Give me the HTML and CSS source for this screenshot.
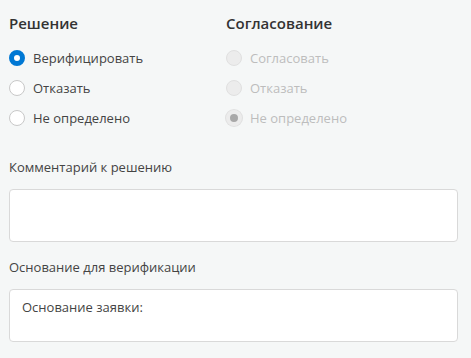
FILE: index.html
```html
<!DOCTYPE html>
<html>
<head>
<meta name="viewport" content="width=device-width, initial-scale=1">
<title>Решение</title>
<link rel="stylesheet" href="styles.css">
</head>
<body>
<form class="panel">
<div class="columns">
    <fieldset class="group">
        <h2>Решение</h2>
        <label class="radio"><input type="radio" name="decision" value="verify" checked><span class="dot"></span>Верифицировать</label>
        <label class="radio"><input type="radio" name="decision" value="reject"><span class="dot"></span>Отказать</label>
        <label class="radio"><input type="radio" name="decision" value="none"><span class="dot"></span>Не определено</label>
    </fieldset>
    <fieldset class="group" disabled>
        <h2>Согласование</h2>
        <label class="radio"><input type="radio" name="approval" value="agree" disabled><span class="dot"></span>Согласовать</label>
        <label class="radio"><input type="radio" name="approval" value="reject" disabled><span class="dot"></span>Отказать</label>
        <label class="radio"><input type="radio" name="approval" value="none" disabled checked><span class="dot"></span>Не определено</label>
    </fieldset>
</div>
<label class="field-label" for="comment">Комментарий к решению</label>
<textarea id="comment" class="field"></textarea>
<label class="field-label second" for="reason">Основание для верификации</label>
<textarea id="reason" class="field">Основание заявки:</textarea>
</form>
</body>
</html>
```
FILE: styles.css
```css
body {
	margin: 0;
	background: #f5f7f7;
	font-family: "Open Sans", "Noto Sans", sans-serif;
	font-size: 13px;
	color: #444;
}
.panel {
	padding: 13px 13px 0 9px;
	display: flex;
	flex-direction: column;
}
.columns {
	display: grid;
	grid-template-columns: 217px auto;
}
.group {
	border: 0;
	margin: 0;
	padding: 0;
	min-width: 0;
	display: flex;
	flex-direction: column;
}
.group h2 {
	margin: 0 0 10px;
	font-size: 15px;
	line-height: 20px;
	font-weight: 600;
	color: #333;
}
.radio {
	display: flex;
	align-items: center;
	height: 30px;
	gap: 8px;
	cursor: pointer;
}
.radio input {
	position: absolute;
	visibility: hidden;
}
.dot {
	width: 16px;
	height: 16px;
	box-sizing: border-box;
	border-radius: 50%;
	border: 1px solid #c8c8c8;
	background: #fff;
	flex: none;
}
.radio input:checked + .dot {
	border: 5px solid #0078d4;
}
.group[disabled] .radio {
	color: #bdbdbd;
	cursor: default;
}
.group[disabled] .dot {
	background: #ececec;
	border-color: #e0e0e0;
}
.group[disabled] .radio input:checked + .dot {
	border: 4px solid #ececec;
	background: #a8a8a8;
	box-shadow: 0 0 0 1px #e0e0e0;
}
.field-label {
	margin-top: 24px;
	line-height: 20px;
}
.field-label.second {
	margin-top: 15px;
}
.field {
	margin-top: 12px;
	height: 53px;
	box-sizing: border-box;
	border: 1px solid #d9d9d9;
	border-radius: 4px;
	background: #fff;
	padding: 7px 12px;
	font: inherit;
	line-height: 20px;
	color: #444;
	resize: none;
}
```
